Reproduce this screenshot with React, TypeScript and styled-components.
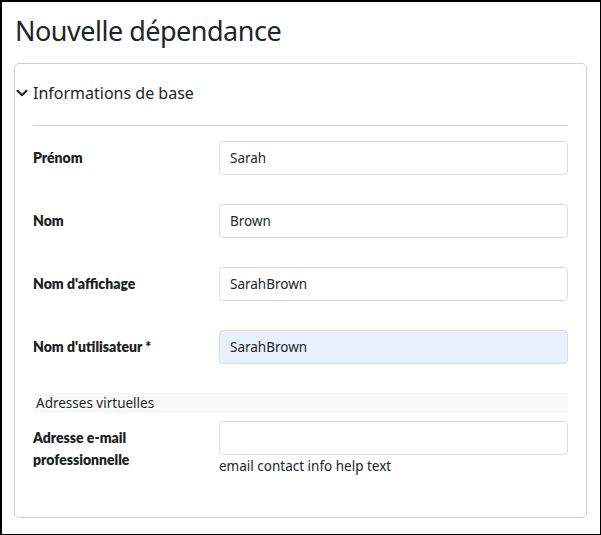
import styled, { createGlobalStyle } from 'styled-components'
import { ChevronDown } from 'lucide-react'

const Global = createGlobalStyle`
  html, body { margin: 0; padding: 0; background: #fff; }
  body { font-family: "Noto Sans", "Open Sans", sans-serif; color: #212529; }
  * { box-sizing: border-box; }
`

type Field = { label: string; value: string; autofill?: boolean }

const fields: Field[] = [
  { label: 'Prénom', value: 'Sarah' },
  { label: 'Nom', value: 'Brown' },
  { label: "Nom d'affichage", value: 'SarahBrown' },
  { label: "Nom d'utilisateur *", value: 'SarahBrown', autofill: true },
]

export default function App() {
  return (
    <Page>
      <Global />
      <Title>Nouvelle dépendance</Title>
      <Card>
        <Header>
          <ChevronDown size={18} strokeWidth={2.8} />
          <span>Informations de base</span>
        </Header>
        <Body>
          {fields.map((f) => (
            <Row key={f.label}>
              <Label>{f.label}</Label>
              <Control>
                <Input $autofill={f.autofill} defaultValue={f.value} />
              </Control>
            </Row>
          ))}
          <SubHeader>Adresses virtuelles</SubHeader>
          <Row $tight>
            <Label $multi>Adresse e-mail<br />professionnelle</Label>
            <Control>
              <Input defaultValue="" />
              <Help>email contact info help text</Help>
            </Control>
          </Row>
        </Body>
      </Card>
    </Page>
  )
}

const Page = styled.div`
  width: 601px; height: 535px; border: 2px solid #000; border-right-width: 1px; border-bottom-width: 1px;
  padding: 11px 13px 0 12px;
`

const Title = styled.h1`
  margin: 0 0 14px 1px; font-size: 27px; font-weight: 400; line-height: 36px; letter-spacing: -0.5px;
  color: #212529;
`

const Card = styled.section`
  border: 1px solid #d0d0d0; border-radius: 5px; height: 455px;
  padding: 0 18px;
`

const Header = styled.div`
  display: flex; align-items: center; height: 62px; padding-bottom: 4px;
  font-size: 16px; color: #212529; border-bottom: 1px solid #cfcfcf;
  svg { margin: 1px 2px 0 -20px; color: #212529; flex: none; }
`

const Body = styled.div`
  display: flex; flex-direction: column; padding-top: 15px;
`

const Row = styled.div<{ $tight?: boolean }>`
  display: flex; align-items: flex-start; margin-bottom: ${({ $tight }) => ($tight ? '0' : '29px')};
`

const Label = styled.div<{ $multi?: boolean }>`
  width: 186px; flex: none; font-family: Lato, "Noto Sans", sans-serif;
  font-size: 14px; font-weight: 800; color: #1c1f23;
  line-height: ${({ $multi }) => ($multi ? '22px' : '34px')};
  padding-top: ${({ $multi }) => ($multi ? '6px' : '0')};
`

const Control = styled.div`
  flex: 1; display: flex; flex-direction: column;
`

const Input = styled.input<{ $autofill?: boolean }>`
  height: 34px; width: 100%; border: 1px solid #dcdcdc; border-radius: 4px;
  padding: 0 10px; font: inherit; font-size: 13.5px; color: #212529;
  background: ${({ $autofill }) => ($autofill ? '#e8f0fe' : '#fff')};
  outline: none;
`

const SubHeader = styled.div`
  background: #f8f8f8; height: 20px; line-height: 20px; padding-left: 3px;
  font-size: 13.5px; color: #212529; margin-bottom: 8px;
`

const Help = styled.div`
  font-size: 13.5px; color: #212529; margin-top: 2px; line-height: 18px;
`
